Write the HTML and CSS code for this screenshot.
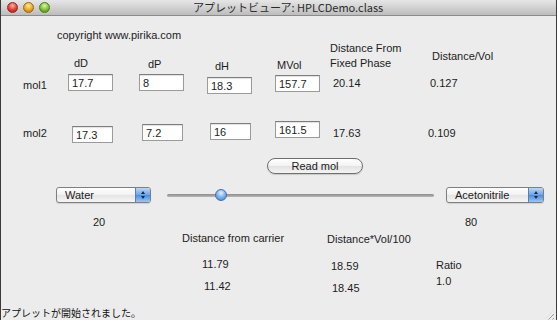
FILE: index.html
```html
<!DOCTYPE html>
<html lang="ja">
<head>
    <meta charset="UTF-8">
    <title>HPLCDemo.class</title>
    <link rel="stylesheet" href="styles.css">
</head>
<body>
    <div class="window">
        <div class="titlebar">
            <div class="lights">
                <span class="light red"></span>
                <span class="light yellow"></span>
                <span class="light green"></span>
            </div>
            <div class="title">アプレットビューア: HPLCDemo.class</div>
        </div>

        <div class="applet">
            <div class="band band-copy">
                <div class="cell copy">copyright www.pirika.com</div>
            </div>

            <div class="band band-head">
                <div class="cell c-dd">dD</div>
                <div class="cell c-dp">dP</div>
                <div class="cell c-dh">dH</div>
                <div class="cell c-mvol">MVol</div>
                <div class="cell c-dist">Distance From<br>Fixed Phase</div>
                <div class="cell c-dvol">Distance/Vol</div>
            </div>

            <div class="band band-mol1">
                <div class="cell m1-label">mol1</div>
                <div class="cell m1-dd"><input class="field" value="17.7"></div>
                <div class="cell m1-dp"><input class="field" value="8"></div>
                <div class="cell m1-dh"><input class="field" value="18.3"></div>
                <div class="cell m1-mvol"><input class="field" value="157.7"></div>
                <div class="cell m1-dist">20.14</div>
                <div class="cell m1-dvol">0.127</div>
            </div>

            <div class="band band-mol2">
                <div class="cell m2-label">mol2</div>
                <div class="cell m2-dd"><input class="field narrow" value="17.3"></div>
                <div class="cell m2-dp"><input class="field narrow" value="7.2"></div>
                <div class="cell m2-dh"><input class="field narrow" value="16"></div>
                <div class="cell m2-mvol"><input class="field" value="161.5"></div>
                <div class="cell m2-dist">17.63</div>
                <div class="cell m2-dvol">0.109</div>
            </div>

            <div class="band band-read">
                <button class="read-button">Read mol</button>
            </div>

            <div class="band band-solvent">
                <div class="popup water">
                    <span class="popup-text">Water</span>
                    <span class="stepper"><i class="up"></i><i class="down"></i></span>
                </div>
                <div class="slider">
                    <div class="track"></div>
                    <div class="thumb"></div>
                </div>
                <div class="popup acn">
                    <span class="popup-text">Acetonitrile</span>
                    <span class="stepper"><i class="up"></i><i class="down"></i></span>
                </div>
            </div>

            <div class="band band-ratio">
                <div class="cell r-left">20</div>
                <div class="cell r-right">80</div>
            </div>

            <div class="band band-result-head">
                <div class="cell h-carrier">Distance from carrier</div>
                <div class="cell h-vol">Distance*Vol/100</div>
            </div>

            <div class="band band-results">
                <div class="col col-carrier">
                    <div class="v1">11.79</div>
                    <div class="v2">11.42</div>
                </div>
                <div class="col col-vol">
                    <div class="v1">18.59</div>
                    <div class="v2">18.45</div>
                </div>
                <div class="col col-ratio">
                    <div class="v1">Ratio</div>
                    <div class="v2">1.0</div>
                </div>
            </div>
        </div>

        <div class="status">
            <span>アプレットが開始されました。</span>
            <span class="grip"></span>
        </div>
    </div>
</body>
</html>
```

FILE: styles.css
```css
body {
    margin: 0;
    background-color: #ececec;
    font-family: "Liberation Sans", Arial, sans-serif;
    font-size: 11px;
    color: #1c1c1c;
}

.window {
    width: 557px;
    height: 320px;
    box-sizing: border-box;
    border-left: 1px solid #3a3a3a;
    border-right: 1px solid #3a3a3a;
    background-color: #ececec;
    display: flex;
    flex-direction: column;
    overflow: hidden;
}

/* title bar */
.titlebar {
    height: 16px;
    flex: none;
    box-sizing: border-box;
    background: linear-gradient(#e6e6e6, #bdbdbd);
    border-bottom: 1px solid #8c8c8c;
    display: flex;
    align-items: center;
}

.lights {
    display: flex;
    gap: 5px;
    padding-left: 6px;
    width: 174px;
}

.light {
    width: 11px;
    height: 11px;
    border-radius: 50%;
    box-sizing: border-box;
}

.red {
    background: radial-gradient(circle at 50% 30%, #ffb3ad, #e5392f 55%, #a2160f);
    border: 1px solid #8f2a24;
}

.yellow {
    background: radial-gradient(circle at 50% 30%, #ffe7a8, #f0a51c 55%, #b1700a);
    border: 1px solid #97661a;
}

.green {
    background: radial-gradient(circle at 50% 30%, #d9f5a8, #7dc130 55%, #3f8412);
    border: 1px solid #4e7a22;
}

.title {
    font-family: "Noto Sans CJK JP", "Liberation Sans", sans-serif;
    font-size: 11px;
    line-height: 15px;
    color: #2a2a2a;
    padding-left: 12px;
}

/* applet canvas */
.applet {
    flex: 1;
    display: flex;
    flex-direction: column;
}

.band {
    display: flex;
    align-items: flex-start;
    flex: none;
}

.cell {
    line-height: 13px;
    white-space: nowrap;
    flex: none;
}

.band-copy { height: 24px; }
.copy { margin: 13px 0 0 56px; }

.band-head { height: 32px; }
.c-dd { margin: 17px 0 0 73px; width: 74px; }
.c-dp { margin-top: 18px; width: 67px; }
.c-dh { margin-top: 20px; width: 62px; }
.c-mvol { margin-top: 19px; width: 53px; }
.c-dist { margin-top: 1px; width: 102px; line-height: 15px; }
.c-dvol { margin-top: 10px; }

.band-mol1 { height: 28px; }
.m1-label { margin: 7px 0 0 22px; width: 45px; }
.m1-dd { margin-top: 2px; width: 71px; }
.m1-dp { margin-top: 2px; width: 68px; }
.m1-dh { margin-top: 5px; width: 68px; }
.m1-mvol { margin-top: 3px; width: 58px; }
.m1-dist { margin-top: 5px; width: 97px; }
.m1-dvol { margin-top: 5px; }

.band-mol2 { height: 50px; }
.m2-label { margin: 27px 0 0 22px; width: 49px; }
.m2-dd { margin-top: 26px; width: 70px; }
.m2-dp { margin-top: 24px; width: 68px; }
.m2-dh { margin-top: 23px; width: 65px; }
.m2-mvol { margin-top: 21px; width: 58px; }
.m2-dist { margin-top: 27px; width: 95px; }
.m2-dvol { margin-top: 27px; }

.field {
    display: block;
    width: 45px;
    height: 17px;
    box-sizing: border-box;
    margin: 0;
    padding: 1px 3px 0;
    border: 1px solid #9b9b9b;
    border-top-color: #7d7d7d;
    box-shadow: inset 0 1px 1px rgba(0, 0, 0, 0.12);
    background-color: #fff;
    font-family: "Liberation Sans", Arial, sans-serif;
    font-size: 11px;
    color: #1c1c1c;
    outline: none;
}

.field.narrow {
    width: 41px;
}

.band-read { height: 30px; }

.read-button {
    margin: 8px 0 0 266px;
    width: 96px;
    height: 16px;
    box-sizing: border-box;
    padding: 0;
    border: 1px solid #6f6f6f;
    border-radius: 8px;
    background: linear-gradient(#ffffff, #f3f3f3 50%, #e2e2e2 51%, #f4f4f4);
    box-shadow: 0 1px 1px rgba(0, 0, 0, 0.15);
    font-family: "Liberation Sans", Arial, sans-serif;
    font-size: 11px;
    line-height: 14px;
    color: #1c1c1c;
}

.band-solvent { height: 30px; }

.popup {
    margin-top: 7px;
    height: 16px;
    box-sizing: border-box;
    border: 1px solid #7f7f7f;
    border-radius: 3px;
    background: linear-gradient(#ffffff, #f1f1f1 50%, #e4e4e4 51%, #f5f5f5);
    box-shadow: 0 1px 1px rgba(0, 0, 0, 0.12);
    display: flex;
    align-items: center;
    justify-content: space-between;
    flex: none;
    overflow: hidden;
}

.popup-text {
    padding-left: 8px;
    line-height: 14px;
}

.water {
    margin-left: 55px;
    width: 95px;
}

.acn {
    width: 98px;
}

.stepper {
    width: 14px;
    height: 14px;
    background: linear-gradient(#bcd7f6, #6aa4e8 50%, #4a8ddf 51%, #9cc6f4);
    border-left: 1px solid #5a7fb0;
    display: flex;
    flex-direction: column;
    align-items: center;
    justify-content: center;
    gap: 2px;
}

.stepper i {
    width: 0;
    height: 0;
    border-left: 2px solid transparent;
    border-right: 2px solid transparent;
}

.stepper .up { border-bottom: 3px solid #1a2a44; }
.stepper .down { border-top: 3px solid #1a2a44; }

.slider {
    margin: 9px 12px 0 16px;
    width: 267px;
    height: 12px;
    display: flex;
    align-items: center;
    flex: none;
}

.track {
    width: 267px;
    height: 3px;
    border-radius: 2px;
    background: linear-gradient(#8c8c8c, #b8b8b8);
    flex: none;
}

.thumb {
    width: 12px;
    height: 12px;
    margin-left: -219px;
    box-sizing: border-box;
    border-radius: 50%;
    border: 1px solid #3e6fb5;
    background: radial-gradient(circle at 50% 30%, #e8f2ff, #7fb2ee 50%, #3b7ed6);
    flex: none;
}

.band-ratio { height: 18px; }
.r-left { margin: 6px 0 0 92px; width: 372px; }
.r-right { margin-top: 6px; }

.band-result-head { height: 22px; }
.h-carrier { margin: 4px 0 0 181px; width: 145px; }
.h-vol { margin-top: 5px; }

.band-results { height: 54px; }

.col {
    display: flex;
    flex-direction: column;
    line-height: 13px;
    flex: none;
}

.col-carrier { margin-left: 201px; width: 129px; padding-top: 8px; }
.col-carrier .v2 { margin-top: 9px; padding-left: 2px; }

.col-vol { width: 105px; padding-top: 10px; }
.col-vol .v2 { margin-top: 9px; padding-left: 1px; }

.col-ratio { padding-top: 9px; }
.col-ratio .v2 { margin-top: 3px; }

/* status line */
.status {
    height: 14px;
    flex: none;
    margin-bottom: 0;
    display: flex;
    align-items: center;
    justify-content: space-between;
    font-family: "Noto Sans CJK JP", "Liberation Sans", sans-serif;
    font-size: 10px;
    line-height: 14px;
    color: #111;
}

.grip {
    width: 9px;
    height: 9px;
    margin: 4px 2px 0 0;
    background: repeating-linear-gradient(135deg, transparent 0 2px, #9a9a9a 2px 3px);
    clip-path: polygon(100% 0, 100% 100%, 0 100%);
}
```
